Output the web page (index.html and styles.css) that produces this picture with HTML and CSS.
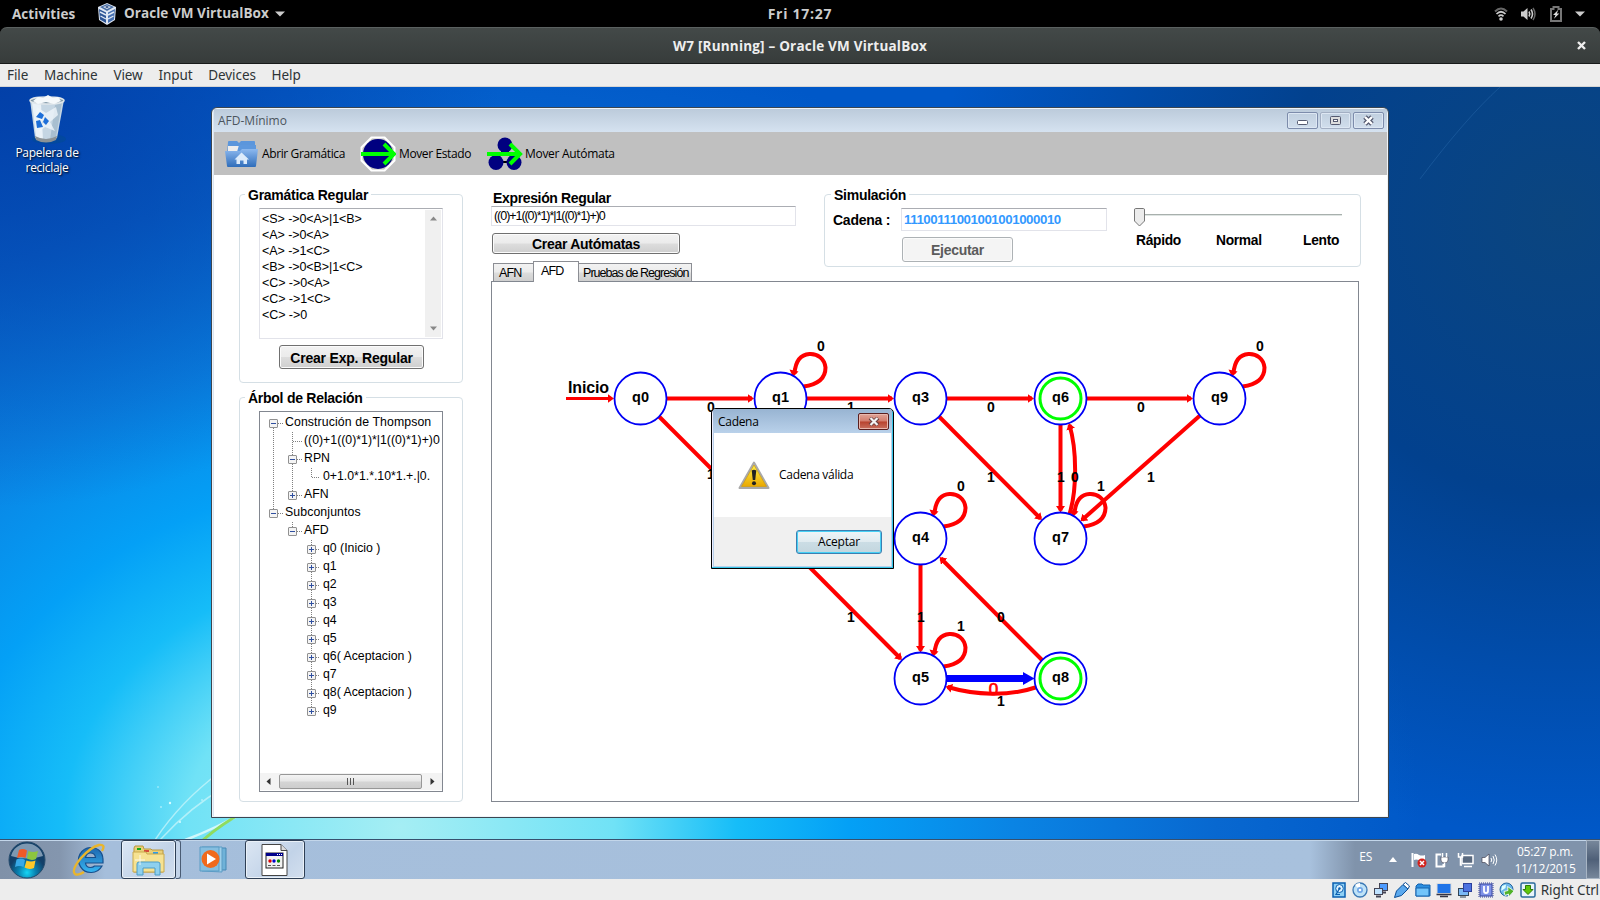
FILE: index.html
```html
<!DOCTYPE html>
<html lang="es">
<head>
<meta charset="utf-8">
<title>W7 [Running] – Oracle VM VirtualBox</title>
<link rel="stylesheet" href="styles.css">
</head>
<body>
<header class="topbar">
  <span class="activities">Activities</span>
  <svg class="vbox-logo" width="20" height="22" viewBox="0 0 20 22"><path d="M10 0 19 4 18 17 10 22 2 17 1 4Z" fill="#dfe7f3"/><path d="M10 1 17 4 10 8 3 4Z" fill="#4a6fa5"/><path d="M6 4 10 2.500 14 4 10 6Z" fill="#dfe7f3"/><path d="M8 4 10 3 12 4 10 5Z" fill="#203f77"/><path d="M2 6 9 9.500V20L3 16.500Z" fill="#2d5596"/><path d="M18 6 11 9.500V20L17 16.500Z" fill="#456fb0"/><path d="M3 9 9 12M3.500 13 9 16M17 9 11 12M16.500 13 11 16" stroke="#dfe7f3" stroke-width="1.400"/></svg>
  <span class="app-name">Oracle VM VirtualBox</span>
  <svg class="app-arrow" width="10" height="6" viewBox="0 0 10 6"><path d="M0 .5H10L5 5.500Z" fill="#ccc"/></svg>
  <span class="clock">Fri 17:27</span>
  <div class="sys">
    <svg width="14" height="14" viewBox="0 0 14 14" fill="none" stroke-width="2"><path d="M1 4.500Q7 -1.500 13 4.500" stroke="#666"/><path d="M2.500 7Q7 2.500 11.500 7M4.500 9.300Q7 7 9.500 9.300" stroke="#ccc" stroke-width="1.700"/><circle cx="7" cy="12" r="1.800" fill="#ccc"/></svg>
    <svg width="16" height="14" viewBox="0 0 16 14" fill="none"><path d="M1 4.500H3.500L7.500 1V13L3.500 9.500H1Z" fill="#ccc"/><path d="M9 4.500Q10.500 7 9 9.500M11 2.500Q14 7 11 11.500" stroke="#ccc" stroke-width="1.600"/><path d="M13 1Q17 7 13 13" stroke="#666" stroke-width="1.500"/></svg>
    <svg width="12" height="16" viewBox="0 0 12 16"><path d="M1 3H3.500V1H8.500V3H11V15H1Z" fill="none" stroke="#777" stroke-width="2"/><path d="M8.500 3.500 3 9H5.500L4 12.800 9.300 7.500H6.800Z" fill="#ddd"/></svg>
    <svg width="10" height="6" viewBox="0 0 10 6"><path d="M0 .5H10L5 5.500Z" fill="#ccc"/></svg>
  </div>
</header>
<div class="host">
  <div class="host-title"><span>W7 [Running] – Oracle VM VirtualBox</span>
    <svg class="host-close" width="9" height="9" viewBox="0 0 9 9"><path d="M1 1 8 8M8 1 1 8" stroke="#eee" stroke-width="2.400"/></svg>
  </div>
</div>
<nav class="menubar"><span>File</span><span>Machine</span><span>View</span><span>Input</span><span>Devices</span><span>Help</span></nav>

<main class="desktop">
  <svg class="wallpaper" width="1600" height="752" viewBox="0 0 1600 752" fill="none">
    <path d="M155 753Q180 715 220 685M160 753Q190 720 225 700" stroke="#cff7fb" stroke-width="1.500" opacity=".7"/>
    <path d="M185 753Q215 742 250 722" stroke="#e8fcfd" stroke-width="2.500" opacity=".8"/>
    <path d="M203 753Q220 738 245 724" stroke="#8fdc5f" stroke-width="3"/>
    <g fill="#d8fbff"><circle cx="170" cy="716" r="1.200"/><circle cx="161" cy="720" r=".8"/><circle cx="180" cy="735" r="1"/><circle cx="158" cy="700" r=".7"/><circle cx="202" cy="713" r=".8"/></g>
    <path d="M1500 0Q1465 32 1420 92" stroke="#3a7fc0" opacity=".3"/>
  </svg>
  <div class="bin">
    <svg width="42" height="50" viewBox="0 0 42 50">
      <ellipse cx="23" cy="44" rx="17" ry="5" fill="#024b8f" opacity=".5"/>
      <path d="M4 5 9 43Q20 49 31 43L38 5Z" fill="#c5d6e3"/><path d="M6 7 10 42Q14 45 17 45L15 9Z" fill="#eaf2f8"/><path d="M36 7 30 42Q27 45 24 45L29 10Z" fill="#a8bfd0"/>
      <path d="M11 12 20 18 30 12 32 20 24 27 29 36 19 32 12 38 17 27 9 20Z" fill="#eef5fa" opacity=".8"/>
      <ellipse cx="21" cy="5.500" rx="17" ry="3.500" fill="#8299a8" stroke="#dfe6ea" stroke-width="1.500"/>
      <path d="M7 6 12 2 17 3 22 0 27 3 32 2 35 6 28 9 20 7 12 9Z" fill="#f5f9fb"/>
      <path d="M9 41Q20 47 31 41L30 45Q20 50 10 45Z" fill="#8b9296"/>
      <path d="M10 22 14 17 18 20 16 24ZM19 22 23 26 20 30 17 27ZM10 26 14 25 17 32 11 33Z" fill="#1d6fd8"/>
    </svg>
    <div>Papelera de<br>reciclaje</div>
  </div>

  <section class="window">
    <div class="win-title"><span>AFD-Mínimo</span>
      <div class="win-btns">
        <i><svg width="29" height="15" viewBox="0 0 29 15"><rect x="9.500" y="7.500" width="10" height="4" rx="1" fill="#fff" stroke="#555a70"/></svg></i>
        <i class="dim"><svg width="29" height="15" viewBox="0 0 29 15"><rect x="9.500" y="3.500" width="10" height="8" rx="1" fill="#ddd" stroke="#555a70"/><rect x="12.500" y="6.500" width="4" height="2" fill="#fff" stroke="#555a70"/></svg></i>
        <i><svg width="29" height="15" viewBox="0 0 29 15"><path d="M11 4 18 11M18 4 11 11" stroke="#555a70" stroke-width="4.800"/><path d="M11 4 18 11M18 4 11 11" stroke="#fff" stroke-width="2.400"/></svg></i>
      </div>
    </div>
    <div class="toolbar">
      <svg width="35" height="28" viewBox="0 0 35 28"><defs><linearGradient id="fold" x2="0" y2="1"><stop stop-color="#8db9ef"/><stop offset="1" stop-color="#2f6dba"/></linearGradient></defs><path d="M4 2Q4 1 5 1H13L15 3 17 1H30Q31 1 31 2V14H3Z" fill="#5b96dc"/><path d="M4 6H31V12H4Z" fill="#ededed"/><path d="M15 5H32V12H13Z" fill="#5d98de"/><path d="M1 11H16L18 9H34L32 26Q32 27 31 27H4Q3 27 3 26Z" fill="url(#fold)"/><path d="M17.500 12.500 25 19.500H23V24H19.500V20.500H16V24H12.500V19.500H10.500Z" fill="#dcebfb"/></svg>
      <span class="t1">Abrir Gramática</span>
      <svg class="i2" width="36" height="36" viewBox="0 0 36 36"><path d="M11 .5H25L35.500 11V25L25 35.500H11L.5 25V11Z" fill="#fff"/><path d="M12 2.500H24L33.500 12V24L24 33.500H12L2.500 24V12Z" fill="#c0c0c0"/><circle cx="18" cy="18" r="15" fill="#000080"/><path d="M1 18H33M24 8 34 18 24 28" fill="none" stroke="#0f0" stroke-width="4"/></svg>
      <span class="t2">Mover Estado</span>
      <svg class="i3" width="36" height="34" viewBox="0 0 36 34"><path d="M18 10 9 25H27Z" fill="none" stroke="#000" stroke-width="2"/><g fill="#000080"><circle cx="18" cy="8" r="7.500"/><circle cx="9" cy="25.500" r="7.500"/><circle cx="27" cy="25.500" r="7.500"/></g><path d="M0 17H33M23 7 33 17 23 27" fill="none" stroke="#0f0" stroke-width="4"/></svg>
      <span class="t3">Mover Autómata</span>
    </div>
    <div class="win-body">
      <div class="left">
        <div class="group g1"><span class="gtitle gt1">Gramática Regular</span>
          <div class="grammar">
            <div class="lines"><div>&lt;S&gt; -&gt;0&lt;A&gt;|1&lt;B&gt;</div><div>&lt;A&gt; -&gt;0&lt;A&gt;</div><div>&lt;A&gt; -&gt;1&lt;C&gt;</div><div>&lt;B&gt; -&gt;0&lt;B&gt;|1&lt;C&gt;</div><div>&lt;C&gt; -&gt;0&lt;A&gt;</div><div>&lt;C&gt; -&gt;1&lt;C&gt;</div><div>&lt;C&gt; -&gt;0</div></div>
            <div class="vscroll"><svg width="7" height="5"><path d="M0 4.500 3.500 .5 7 4.500Z" fill="#888"/></svg><svg width="7" height="5"><path d="M0 .5 3.500 4.500 7 .5Z" fill="#888"/></svg></div>
          </div>
          <button class="btn b1">Crear Exp. Regular</button>
        </div>
        <div class="group g2"><span class="gtitle gt2">Árbol de Relación</span>
          <div class="treebox">
            <div class="tree">
              <svg class="treelines" width="60" height="310" fill="none" stroke="#808080" stroke-dasharray="1 1"><path d="M13.500 12V101M14 11.500H24M14 101.500H24M32.500 20V83M33 29.500H42M33 47.500H42M33 83.500H42M51.500 56V65.500H61M32.500 110V119.500H42M51.500 128V299M52 137.500H61M52 155.500H61M52 173.500H61M52 191.500H61M52 209.500H61M52 227.500H61M52 245.500H61M52 263.500H61M52 281.500H61M52 299.500H61"/></svg>
              <div class="n l1"><i></i>Construción de Thompson</div>
              <div class="n l2"><b></b>((0)+1((0)*1)*|1((0)*1)+)0</div>
              <div class="n l2"><i></i>RPN</div>
              <div class="n l3"><b></b>0+1.0*1.*.10*1.+.|0.</div>
              <div class="n l2"><i class="plus"></i>AFN</div>
              <div class="n l1"><i></i>Subconjuntos</div>
              <div class="n l2"><i></i>AFD</div>
              <div class="n l3"><i class="plus"></i>q0 (Inicio )</div>
              <div class="n l3"><i class="plus"></i>q1</div>
              <div class="n l3"><i class="plus"></i>q2</div>
              <div class="n l3"><i class="plus"></i>q3</div>
              <div class="n l3"><i class="plus"></i>q4</div>
              <div class="n l3"><i class="plus"></i>q5</div>
              <div class="n l3"><i class="plus"></i>q6( Aceptacion )</div>
              <div class="n l3"><i class="plus"></i>q7</div>
              <div class="n l3"><i class="plus"></i>q8( Aceptacion )</div>
              <div class="n l3"><i class="plus"></i>q9</div>
            </div>
            <div class="hscroll"><svg width="5" height="7"><path d="M4.500 0V7L.5 3.500Z" fill="#333"/></svg><div class="thumb"><u></u><u></u><u></u></div><svg width="5" height="7"><path d="M.5 0V7L4.500 3.500Z" fill="#333"/></svg></div>
          </div>
        </div>
      </div>
      <div class="right">
        <div class="head">
          <div class="expr">
            <span class="elabel">Expresión Regular</span>
            <div class="field f1">((0)+1((0)*1)*|1((0)*1)+)0</div>
            <button class="btn b2">Crear Autómatas</button>
            <div class="tabs"><span class="tab ta">AFN</span><span class="tab on">AFD</span><span class="tab tc">Pruebas de Regresión</span></div>
          </div>
          <div class="group g3"><span class="gtitle gt3">Simulación</span>
            <div class="sim">
              <div class="simleft">
                <div class="crow"><span class="clabel">Cadena :</span><div class="field f2">11100111001001001000010</div></div>
                <button class="btn b3">Ejecutar</button>
              </div>
              <div class="simright">
                <svg width="214" height="20" viewBox="0 0 214 20"><path d="M0 6.500H208" stroke="#a8b0ad"/><path d="M0 7.500H208" stroke="#dfe5e3"/><path d="M1.500 .5H9.500Q10.500 .5 10.500 2V13L5.500 18 .5 13V2Q.5 .5 1.500 .5Z" fill="#ececec" stroke="#777"/></svg>
                <div class="speeds"><span>Rápido</span><span>Normal</span><span>Lento</span></div>
              </div>
            </div>
          </div>
        </div>
        <div class="panel">
          <svg class="graph" width="866" height="519" viewBox="492 282 866 519">
            <defs>
              <marker id="ar" markerUnits="userSpaceOnUse" markerWidth="10" markerHeight="10" refX="4.500" refY="4.500" orient="auto"><path d="M0 0 6.500 4.500 0 9Z" fill="#f00"/></marker>
              <g id="loop"><path d="M23 -12C38 -14 45 -20 45 -31C44 -40 37 -45 29 -44.500C21 -44 15 -38 14 -25" fill="none" stroke="#f00" stroke-width="4"/><path d="M9 -29 18 -27 12.500 -21.500Z" fill="#f00"/></g>
              <circle id="node" r="26" fill="#fff" stroke="#0000f5" stroke-width="1.800"/>
            </defs>
            <g stroke="#f00" stroke-width="4" fill="none" marker-end="url(#ar)">
              <path d="M566 398.500H612" stroke-width="3"/>
              <path d="M666 398.500H752"/><path d="M806 398.500H892"/><path d="M946 398.500H1032"/><path d="M1086 398.500H1191"/>
              <path d="M659 416.500 762 519.500"/><path d="M799 556.500 900.500 658.500"/><path d="M939 416.500 1040.500 518.500"/>
              <path d="M1200 415.500 1082 520"/><path d="M1060.500 424V510.500"/><path d="M920.500 564V650.500"/><path d="M1042 660 941 558.500"/>
              <path d="M1069.500 514C1077 490 1077 450 1069.500 425"/>
              <path d="M1037 687C1008 697 975 695 947.500 687"/>
            </g>
            <path d="M946 678.500H1025" stroke="#00f" stroke-width="7"/><path d="M1023 672 1034.500 678.500 1023 685Z" fill="#00f"/>
            <use href="#loop" x="780.500" y="398.500"/><use href="#loop" x="1219.500" y="398.500"/><use href="#loop" x="920.500" y="538.500"/><use href="#loop" x="1060.500" y="538.500"/><use href="#loop" x="920.500" y="678.500"/>
            <use href="#node" x="640.500" y="398.500"/><use href="#node" x="780.500" y="398.500"/><use href="#node" x="920.500" y="398.500"/><use href="#node" x="1060.500" y="398.500"/><use href="#node" x="1219.500" y="398.500"/><use href="#node" x="920.500" y="538.500"/><use href="#node" x="1060.500" y="538.500"/><use href="#node" x="920.500" y="678.500"/><use href="#node" x="1060.500" y="678.500"/>
            <circle cx="1060.500" cy="398.500" r="20.500" fill="none" stroke="#0f0" stroke-width="3"/><circle cx="1060.500" cy="678.500" r="20.500" fill="none" stroke="#0f0" stroke-width="3"/>
            <g class="nodetext"><text x="640.500" y="402">q0</text><text x="780.500" y="402">q1</text><text x="920.500" y="402">q3</text><text x="1060.500" y="402">q6</text><text x="1219.500" y="402">q9</text><text x="920.500" y="542">q4</text><text x="1060.500" y="542">q7</text><text x="920.500" y="682">q5</text><text x="1060.500" y="682">q8</text></g>
            <g class="edgetext"><text x="711" y="411.500">0</text><text x="851" y="411.500">1</text><text x="991" y="411.500">0</text><text x="1141" y="411.500">0</text><text x="821" y="350.500">0</text><text x="1260" y="350.500">0</text><text x="961" y="490.500">0</text><text x="1101" y="490.500">1</text><text x="991" y="481.500">1</text><text x="1061" y="481.500">1</text><text x="1075" y="481.500">0</text><text x="1151" y="481.500">1</text><text x="711" y="478.500">1</text><text x="851" y="621.500">1</text><text x="921" y="621.500">1</text><text x="1001" y="621.500">0</text><text x="961" y="630.500">1</text><text x="1001" y="705.500">1</text></g>
            <text class="redtext" x="993.500" y="695">0</text>
            <text class="start" x="568" y="393" textLength="41">Inicio</text>
          </svg>
        </div>
      </div>
    </div>
  </section>

  <section class="dialog">
    <div class="dlg-title"><span>Cadena</span><i><svg width="12" height="9" viewBox="0 0 12 9"><path d="M2 1 10 8M10 1 2 8" stroke="#6b4040" stroke-width="4"/><path d="M2.500 1 9.500 8M9.500 1 2.500 8" stroke="#f4f4f4" stroke-width="2.200"/></svg></i></div>
    <div class="dlg-body">
      <svg width="32" height="29" viewBox="0 0 32 29"><defs><linearGradient id="warn" x2="0" y2="1"><stop stop-color="#fff04a"/><stop offset="1" stop-color="#eaa800"/></linearGradient></defs><path d="M16 1.500 30.500 27H1.500Z" fill="#ddd" stroke="#a9a9a9" stroke-width="2" stroke-linejoin="round"/><path d="M16 4 28.500 25.500H3.500Z" fill="url(#warn)" stroke="#c89400" stroke-width=".7"/><path d="M13.700 9.500Q16 8 18.300 9.500L17.200 19H14.800Z" fill="#222"/><circle cx="16" cy="22.300" r="2" fill="#222"/></svg>
      <span>Cadena válida</span>
    </div>
    <div class="dlg-foot"><button class="accept">Aceptar</button></div>
  </section>
</main>

<footer class="taskbar">
  <svg class="orb" width="38" height="38" viewBox="0 0 38 38"><defs><radialGradient id="orbg" cy=".85"><stop stop-color="#15d5f5"/><stop offset=".5" stop-color="#087fae"/><stop offset="1" stop-color="#123f68"/></radialGradient></defs><circle cx="19" cy="19" r="18" fill="url(#orbg)" stroke="#254b6c"/><path d="M3 15A16.500 16.500 0 0 1 35 15Q19 20 3 15Z" fill="#d6e2ec" opacity=".55"/><path d="M11 9Q15 7 19 9.500L17.500 17Q13 15 9 17Z" fill="#ef5a28"/><path d="M20.500 10Q25 12 30 10L28 18Q23.500 20 19 17.500Z" fill="#8cc63f"/><path d="M8.500 18.500Q13 16.500 17 19L15.500 26Q11 24 7 26Z" fill="#38a9e8"/><path d="M18.500 19.500Q23 21.500 27.500 19.500L26 27Q21 29 16.500 26.500Z" fill="#fdc829"/></svg>
  <svg class="ie" width="34" height="34" viewBox="0 0 34 34"><defs><linearGradient id="ieg" x2="0" y2="1"><stop stop-color="#1f66ae"/><stop offset="1" stop-color="#35b6f2"/></linearGradient></defs><path d="M18.500 4.500A12.500 12.500 0 1 0 30 23H22.500Q21 24.500 18.500 24.500Q14 24.500 13.500 20H31Q32 5 18.500 4.500ZM13.500 14.500Q14.500 10 18.500 10Q23 10 23.500 14.500Z" fill="url(#ieg)" fill-rule="evenodd" stroke="#174f8c" stroke-width="1.200"/><path d="M30 8Q34 1 27 2Q19 4 9 15Q-1 27 3 31Q6 33 12 29" fill="none" stroke="#e9b52c" stroke-width="2.400"/></svg>
  <div class="tb explorer"><svg width="34" height="32" viewBox="0 0 34 32"><path d="M2 4 3 2H11L12 5H19L20 6H31V28H2Z" fill="#e9cf78" stroke="#b9973f"/><path d="M5 4H9V6H5Z" fill="#18a818"/><path d="M12 6H17V8H12Z" fill="#d54a38"/><path d="M21 8H26V10H21Z" fill="#2d9be8"/><path d="M1 8H14L15 10H32V28H1Z" fill="#f6e292" stroke="#c9a94d"/><path d="M5 31V20Q5 18 7 18H26Q28 18 28 20V31H23V24H11V31Z" fill="#8ed0ee" stroke="#4c9cc6"/><path d="M8 11V21M3 16H13" stroke="#fff" opacity=".8"/></svg></div><div class="stack"></div>
  <svg class="wmp" width="30" height="27" viewBox="0 0 30 27"><path d="M6 2H27V24H6Z" fill="#6fb2d8" stroke="#4688b5"/><path d="M3 1H23V26L3 25Z" fill="#9fd0ea" stroke="#5b9cc5"/><path d="M1 1H20V25H1Z" fill="#86bfe0" stroke="#5b9cc5"/><circle cx="11.500" cy="13" r="9" fill="#f06a1c"/><path d="M8 7.500V18.500L17 13Z" fill="#fff"/></svg>
  <div class="tb app"><svg width="28" height="32" viewBox="0 0 28 32"><path d="M1 .5H20L26 6.500V31.500H1Z" fill="#fff" stroke="#444"/><path d="M20 .5V6.500H26" fill="#ddd" stroke="#444"/><rect x="5" y="9" width="17" height="15" fill="#f2f2f2" stroke="#222"/><path d="M5 9H22V12H5Z" fill="#00008b"/><path d="M16 10.500H21" stroke="#fff" stroke-dasharray="1 1"/><circle cx="9" cy="17" r="1.700" fill="#d00"/><circle cx="13" cy="17" r="1.700" fill="#00c"/><circle cx="17.500" cy="17" r="1.700" fill="#080"/><path d="M7 21.500H20" stroke="#555" stroke-dasharray="3 1.500"/></svg></div>
  <div class="tray">
    <span class="lang">ES</span>
    <svg class="up" width="8" height="5"><path d="M0 5 4 0 8 5Z" fill="#fff"/></svg>
    <svg width="16" height="16" viewBox="0 0 16 16"><path d="M1.500 1V15" stroke="#fff" stroke-width="2"/><path d="M3 2Q6 1 8 3Q11 4 14 3V9Q10 10 8 8Q5 7 3 8Z" fill="#fff"/><circle cx="11" cy="11" r="4.500" fill="#d3221c"/><path d="M9 9 13 13M13 9 9 13" stroke="#fff" stroke-width="1.500"/></svg>
    <svg width="16" height="16" viewBox="0 0 16 16" fill="none" stroke="#fff"><path d="M7 2.500H2.500V14.500H9.500V12" stroke-width="2"/><path d="M7 5H14V8Q14 11 10.500 11Q7 11 7 8Z" fill="#fff" stroke="#445" stroke-width=".6"/><path d="M8.500 5V1M12.500 5V1M10.500 11V15" stroke-width="1.500"/></svg>
    <svg width="17" height="16" viewBox="0 0 17 16"><rect x="5" y="3.500" width="11" height="8" fill="#5a6a80" stroke="#fff" stroke-width="1.500"/><path d="M7 14.500H15M1.500 1V5H5.500V1M3.500 5V13H5" fill="none" stroke="#fff" stroke-width="1.500"/></svg>
    <svg width="17" height="16" viewBox="0 0 17 16" fill="none"><path d="M1 5.500H4L8 2V14L4 10.500H1Z" fill="#fff" stroke="#445" stroke-width=".7"/><path d="M10 6Q11.500 8 10 10M12 4Q14.500 8 12 12M14 2.500Q17.500 8 14 13.500" stroke="#fff"/></svg>
    <div class="time">05:27 p.m.<br>11/12/2015</div>
    <div class="peek"></div>
  </div>
</footer>
<div class="status">
  <svg width="16" height="16" viewBox="0 0 16 16"><rect x="2" y="1" width="12" height="14" fill="#8fd0f5" stroke="#0a5fb0" stroke-width="1.500"/><ellipse cx="8.500" cy="6.500" rx="3.800" ry="4" fill="#dff2fd" stroke="#0a5fb0"/><circle cx="8.500" cy="6.500" r="1.200" fill="#0a5fb0"/><path d="M8.500 6.500 5 12.500H9" fill="none" stroke="#0a5fb0" stroke-width="1.200"/></svg>
  <svg width="16" height="16" viewBox="0 0 16 16"><circle cx="8" cy="8" r="7" fill="#bfe2f7" stroke="#3b78b5" stroke-width="1.300"/><path d="M8 8 3 3A7 7 0 0 1 8 1Z" fill="#fff"/><circle cx="8" cy="8" r="3" fill="#6fa5e8"/><circle cx="8" cy="8" r="1.300" fill="#fff"/></svg>
  <svg width="16" height="16" viewBox="0 0 16 16"><rect x="6.500" y="1.500" width="8" height="7" fill="#4d9bff" stroke="#445"/><path d="M9 10.500H13" stroke="#445" stroke-width="2"/><rect x="1.500" y="6.500" width="8" height="6" fill="#bfe2ff" stroke="#445"/><path d="M3 14.500H8" stroke="#445" stroke-width="2"/></svg>
  <svg width="16" height="16" viewBox="0 0 16 16"><path d="M.5 15.500 2.500 9 9 2.500 14 7 7.500 13.500Z" fill="#5aa9ee" stroke="#0a4c94"/><path d="M9 2.500 11.500 .5 15.500 4 14 7Z" fill="#fff" stroke="#0a4c94"/></svg>
  <svg width="16" height="16" viewBox="0 0 16 16"><path d="M1 14V4L3 2H7L8 3H15V14Z" fill="#2c8fe0" stroke="#1463ad"/><path d="M1 14V6H14V14Z" fill="#72c4fa" stroke="#1463ad"/></svg>
  <svg width="16" height="16" viewBox="0 0 16 16"><rect x="1" y="1.500" width="14" height="10" fill="#1f74e8" stroke="#ddd"/><path d="M.5 12.500H15.500M4 14.500H12" stroke="#334" stroke-width="1.500"/></svg>
  <svg width="16" height="16" viewBox="0 0 16 16"><rect x="1.500" y="6.500" width="10" height="7" fill="#7ab9f5" stroke="#345"/><rect x="6.500" y="1.500" width="8" height="8" fill="#4c72e0" stroke="#2a3f9c"/><path d="M3 15H9" stroke="#345"/></svg>
  <svg width="16" height="16" viewBox="0 0 16 16"><rect x="2" y="2" width="12" height="12" fill="#7f92e8" stroke="#36449c"/><rect x="1" y="1" width="14" height="14" fill="none" stroke="#36449c" stroke-dasharray="1 1"/><path d="M6 4V9Q6 11 8 11Q10 11 10 9V4" fill="none" stroke="#fff" stroke-width="1.800"/></svg>
  <svg width="16" height="16" viewBox="0 0 16 16"><circle cx="7.500" cy="7.500" r="6.500" fill="#6cb7ea" stroke="#24659f"/><path d="M3 4 7 2.500 6.500 6 2 9Z" fill="#dff"/><path d="M8.500 4.500 15 9 9.500 15V12L6 13.500 5 9.500 9 8.500Z" fill="#52b22a" stroke="#fff" stroke-width=".8"/></svg>
  <svg width="16" height="16" viewBox="0 0 16 16"><rect x="1" y="1" width="14" height="14" rx="1.500" fill="#e7f4fb" stroke="#2a6a9c" stroke-width="1.500"/><path d="M5.500 3.500H10.500V7.500H13L8 12.500 3 7.500H5.500Z" fill="#5ec70b" stroke="#2c7a05"/></svg>
  <span>Right Ctrl</span>
</div>
</body>
</html>
```
FILE: styles.css
```css
* { box-sizing: border-box; }
body { margin: 0; width: 1600px; height: 900px; overflow: hidden; background: #000; font-family: "Liberation Sans", Arial, sans-serif; display: flex; flex-direction: column; }
svg { display: block; flex: none; }
button { margin: 0; padding: 0; font-family: inherit; display: block; }
span { white-space: nowrap; }

/* host desktop */
.topbar { height: 27px; position: relative; display: flex; align-items: center; color: #ccc; font: bold 13.5px "Open Sans", "Noto Sans", sans-serif; }
.activities { margin-left: 12px; width: 85px; letter-spacing: .05px; }
.app-name { margin-left: 7px; width: 146px; letter-spacing: .05px; margin-top: -1px; }
.app-arrow { margin-left: 5px; }
.clock { position: absolute; left: 0; width: 1600px; text-align: center; font-size: 14px; letter-spacing: .75px; }
.sys { margin-left: auto; margin-right: 15px; display: flex; align-items: center; }
.sys svg { margin-left: 13px; }
.sys svg:nth-child(2) { margin-left: 12px; }
.sys svg:nth-child(3) { margin-left: 14px; }
.host { height: 37px; background: #000; }
.host-title { height: 37px; border-radius: 7px 7px 0 0; background: linear-gradient(#434948, #373c3b); border-top: 1px solid #5b6160; border-bottom: 1px solid #171a1a; display: flex; align-items: center; justify-content: center; position: relative; color: #eee; font: bold 13.5px "Open Sans", "Noto Sans", sans-serif; letter-spacing: .2px; }
.host-close { position: absolute; left: 1577px; top: 13px; }
.menubar { height: 23px; background: #ededed; display: flex; align-items: center; gap: 15.8px; padding-left: 7px; color: #2e3436; font: 13.500px "Noto Sans", sans-serif; letter-spacing: -.08px; border-bottom: 1px solid #d5d5d5; }

/* guest desktop */
.desktop { height: 752px; position: relative; overflow: hidden; background:
  radial-gradient(ellipse 500px 420px at 0 0, #0340a8, rgba(3,64,168,0)),
  radial-gradient(ellipse 620px 620px at 1560px 130px, #0b457f 0, #02418e 45%, rgba(0,66,150,0)),
  radial-gradient(ellipse 1020px 800px at 400px 740px, #a5eef4 0, #70e2f6 21%, #16bdf8 33%, #04a0f6 44%, #0a84e4 60%, #0868d0 80%, #0058c8 100%); }
.wallpaper { position: absolute; left: 0; top: 0; }
.bin { position: absolute; left: 7px; top: 8px; width: 80px; display: flex; flex-direction: column; align-items: center; text-align: center; color: #fff; font: 12px/15px "Open Sans", sans-serif; letter-spacing: -.3px; text-shadow: 1px 1px 2px #000; }

.window { position: absolute; left: 211px; top: 20px; width: 1178px; height: 711px; border: 1px solid #3c4650; border-radius: 6px 6px 0 0; background: #dbe6f2; padding: 1px 1px 1px 2px; box-shadow: inset 0 0 0 1px #eef4fa; overflow: hidden; }
.win-title { height: 23px; display: flex; align-items: center; justify-content: space-between; padding: 0 3px 0 4px; background: linear-gradient(#bccbdb, #d5e2f0); font: 12px "Open Sans", sans-serif; color: #4c555e; }
.win-btns { display: flex; gap: 2px; }
.win-btns i { width: 31px; height: 17px; border: 1px solid #7d8cab; border-radius: 2px; box-shadow: inset 0 0 0 1px #dde7f3; }
.win-btns .dim { border-color: #a3afc3; }
.toolbar { height: 43px; background: #c0c0c0; display: flex; align-items: center; padding-left: 10px; font: 12px "Open Sans", sans-serif; letter-spacing: -.38px; color: #000; }
.t1 { width: 98px; margin-left: 3px; }
.t2 { width: 88px; margin-left: 3px; }
.t3 { margin-left: 2px; letter-spacing: -.3px; }
.win-body { height: 641px; background: #fff; display: flex; padding: 19px 26px 0 25px; gap: 28px; }
.left { width: 224px; flex: none; display: flex; flex-direction: column; gap: 14px; }
.group { border: 1px solid #d5dfe5; border-radius: 4px; display: flex; flex-direction: column; }
.gtitle { align-self: flex-start; background: #fff; font-weight: bold; font-size: 14px; letter-spacing: -.26px; line-height: 16px; height: 16px; margin: -8px 0 0 5px; padding: 0 3px; }
.g1 { height: 189px; }
.g2 { height: 405px; }
.grammar { margin: 5px 0 0 19px; width: 184px; height: 131px; border: 1px solid #e2e3ea; border-top-color: #abadb3; display: flex; justify-content: space-between; padding: 1px; }
.lines { font-size: 12.500px; letter-spacing: -.07px; line-height: 16px; padding: 1px 0 0 1px; }
.vscroll { width: 16px; background: #f0f0f0; display: flex; flex-direction: column; justify-content: space-between; align-items: center; padding: 6px 0; }
.btn { border: 1px solid #707070; border-radius: 3px; background: linear-gradient(#f2f2f2, #ebebeb 49%, #ddd 51%, #cfcfcf); box-shadow: inset 0 0 0 1px #fbfbfb; font-weight: bold; font-size: 14px; letter-spacing: -.28px; color: #000; line-height: 1; padding-top: 1px; }
.b1 { margin: 6px 0 0 39px; width: 145px; height: 24px; letter-spacing: -.2px; }
.treebox { margin: 5px 0 0 19px; width: 184px; height: 381px; border: 1px solid #828790; display: flex; flex-direction: column; justify-content: space-between; }
.tree { position: relative; padding-top: 1px; font-size: 12.300px; }
.treelines { position: absolute; left: 0; top: 0; }
.n { height: 18px; line-height: 18px; display: flex; align-items: center; white-space: nowrap; position: relative; }
.n i { width: 9px; height: 9px; border: 1px solid #919191; border-radius: 1px; background: #f4f4f4; margin: 3px 7px 0 0; position: relative; flex: none; }
.n i::before { content: ""; position: absolute; left: 1px; top: 3px; width: 5px; height: 1px; background: #3050a0; }
.n .plus::after { content: ""; position: absolute; left: 3px; top: 1px; width: 1px; height: 5px; background: #3050a0; }
.n b { width: 16px; flex: none; }
.l1 { padding-left: 9px; letter-spacing: .1px; }
.l2 { padding-left: 28px; }
.l3 { padding-left: 47px; }
.hscroll { height: 17px; margin-bottom: 1px; background: #f3f3f3; display: flex; align-items: center; padding: 0 7px 0 6px; }
.thumb { margin: 0 auto 0 8px; width: 143px; height: 15px; border: 1px solid #979797; border-radius: 2px; background: linear-gradient(#f4f4f4, #e6e6e6 49%, #d5d5d5 51%, #cdcdcd); display: flex; justify-content: center; align-items: center; gap: 2px; }
.thumb u { width: 1px; height: 7px; background: #555; }

.right { width: 870px; flex: none; }
.head { height: 87px; display: flex; }
.expr { width: 333px; display: flex; flex-direction: column; }
.elabel { font-weight: bold; font-size: 14px; letter-spacing: -.35px; line-height: 16px; height: 16px; margin: -4px 0 0 2px; }
.field { border: 1px solid #e2e3ea; border-top-color: #abadb3; background: #fff; white-space: nowrap; }
.f1 { width: 305px; height: 20px; font-size: 12.500px; letter-spacing: -1.050px; line-height: 18px; padding-left: 2px; }
.b2 { margin: 7px 0 0 1px; width: 188px; height: 21px; }
.tabs { margin-top: 7px; height: 20px; display: flex; align-items: flex-end; padding-left: 2px; }
.tab { height: 18px; border: 1px solid #8c8e94; border-bottom: 0; background: linear-gradient(#f2f2f2, #ebebeb 49%, #ddd 51%, #cfcfcf); font-size: 12.500px; line-height: 18px; padding-left: 5px; letter-spacing: -.95px; }
.ta { width: 40px; border-right: 0; letter-spacing: -.9px; }
.on { width: 46px; height: 21px; background: #fff; margin-bottom: -1px; padding-left: 7px; position: relative; line-height: 18px; letter-spacing: -.9px; }
.tc { width: 113px; border-left: 0; padding-left: 4px; }
.g3 { width: 537px; height: 73px; }
.gt3 { margin-left: 6px; }
.sim { display: flex; }
.simleft { width: 309px; padding: 5px 0 0 8px; }
.crow { display: flex; align-items: center; }
.clabel { width: 68px; font-weight: bold; font-size: 14px; letter-spacing: -.25px; }
.f2 { width: 206px; height: 23px; color: #3399ff; font-weight: bold; font-size: 13.300px; line-height: 21px; padding-left: 2px; letter-spacing: -.45px; }
.b3 { margin: 6px 0 0 69px; width: 111px; height: 25px; background: #f4f4f4; border-color: #adb2b5; color: #5b5b5b; }
.simright { padding-top: 5px; }
.speeds { display: flex; margin: 5px 0 0 2px; font-weight: bold; font-size: 13.800px; letter-spacing: -.3px; line-height: 16px; }
.speeds span:nth-child(1) { width: 80px; }
.speeds span:nth-child(2) { width: 87px; }
.panel { width: 868px; height: 521px; border: 1px solid #828790; }
.nodetext, .edgetext { font-weight: bold; font-size: 14.500px; text-anchor: middle; }
.edgetext { font-size: 14px; }
.redtext { fill: #f00; font-size: 17px; text-anchor: middle; stroke: #f00; stroke-width: .7px; }
.start { font-weight: bold; font-size: 16px; }

.dialog { position: absolute; left: 711px; top: 321px; width: 183px; height: 161px; border: 1px solid #000; border-radius: 5px 5px 0 0; background: #b9d1ea; padding: 0 2px 2px; box-shadow: inset -1px -1px 0 #35c5e8, inset 1px 1px 0 #eef; overflow: hidden; font: 12px "Open Sans", sans-serif; color: #000; letter-spacing: -.3px; }
.dlg-title { height: 24px; margin: 0 -1px; background: linear-gradient(#98b4d2, #b9d1ea); display: flex; justify-content: space-between; padding: 0 3px 0 5px; align-items: center; }
.dlg-title i { width: 31px; height: 17px; border: 1px solid #5a1f1f; border-radius: 2px; background: linear-gradient(#e0a498, #d27c6c 48%, #b8422e 52%, #c8705f); display: flex; align-items: center; justify-content: center; box-shadow: inset 0 0 0 1px #e8b8ae; }
.dlg-body { height: 84px; background: #fff; display: flex; align-items: center; gap: 9px; padding-left: 24px; }
.dlg-body span { margin-top: -2px; }
.dlg-foot { height: 49px; background: #f0f0f0; display: flex; justify-content: flex-end; align-items: center; padding-right: 9px; }
.accept { width: 86px; height: 24px; border: 1px solid #3c7fb1; border-radius: 3px; background: linear-gradient(#eef5f8, #e0ebf0 49%, #cbdde5 51%, #c3d6de); box-shadow: inset 0 0 0 1px #46d0f5; font-size: 12px; color: #000; letter-spacing: -.2px; }

/* guest taskbar */
.taskbar { height: 40px; display: flex; align-items: center; border-top: 1px solid #37506e; box-shadow: inset 0 1px 0 #c3d6ea; background: linear-gradient(90deg, #8091a8 0, #8496ae 60px, #a5bedb 105px, #a8c1dd 1310px, #8093ab 1355px, #8093ab); }
.orb { margin-left: 8px; }
.ie { margin-left: 26px; }
.tb { height: 39px; border: 1px solid #2e3f55; border-radius: 3px; background: linear-gradient(135deg, #dbe6f3, #c2d3e8 60%, #d3dfee); box-shadow: inset 0 0 0 1px #eaf1f8; display: flex; align-items: center; justify-content: center; }
.explorer { width: 55px; margin-left: 15px; }
.stack { width: 5px; height: 39px; border: 1px solid #4a5c74; border-left: 0; border-radius: 0 3px 3px 0; background: #c2d3e8; }
.wmp { margin-left: 18px; }
.app { width: 60px; margin-left: 16px; }
.tray { margin-left: auto; display: flex; align-items: center; color: #fff; font: 12px/17px "Open Sans", sans-serif; letter-spacing: -.25px; height: 39px; }
.lang { margin-right: 17px; margin-top: -6px; }
.up { margin-right: 14px; }
.tray > svg:not(.up) { margin-right: 7px; }
.time { width: 74px; text-align: center; margin-left: 3px; }
.peek { width: 14px; height: 39px; margin-left: 4px; border: 1px solid #a8b5c4; background: linear-gradient(#77879b, #4f6078 50%, #76869a); }
.status { height: 21px; background: #ededed; display: flex; align-items: center; justify-content: flex-end; gap: 5px; color: #2e3436; font: 13.500px "Noto Sans", sans-serif; letter-spacing: -.12px; padding-right: 1px; }
```
